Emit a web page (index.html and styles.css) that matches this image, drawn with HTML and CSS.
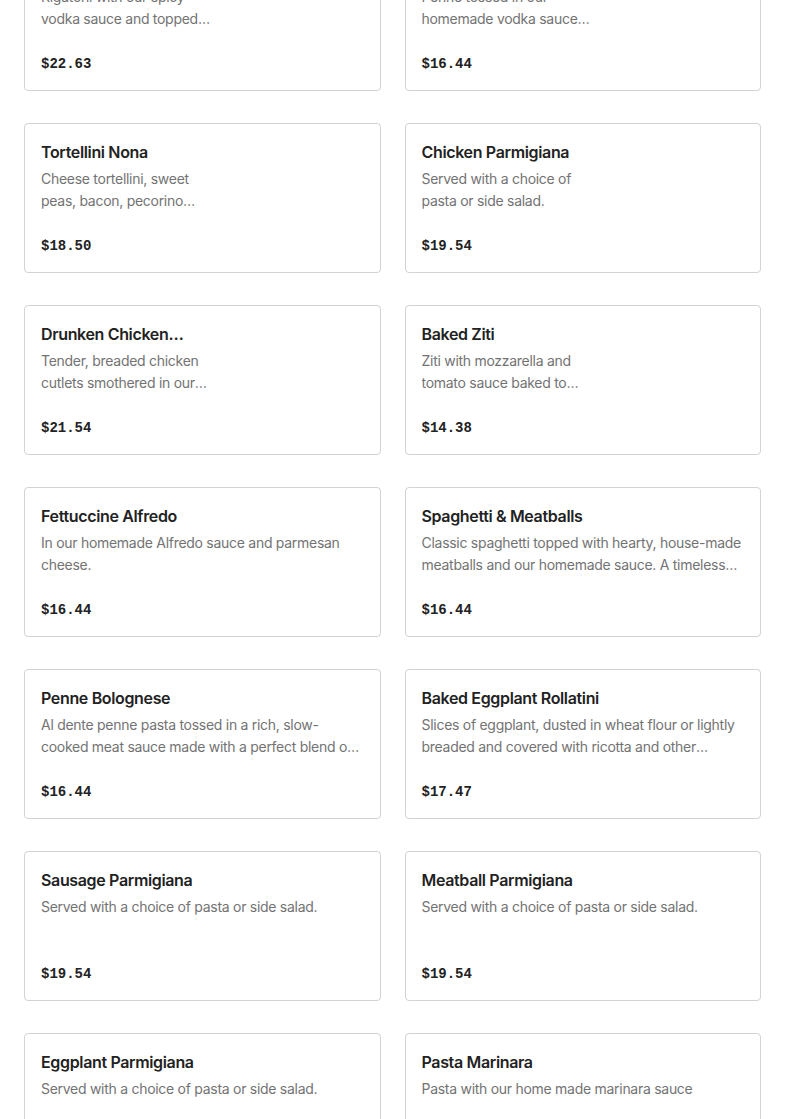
FILE: index.html
```html
<!DOCTYPE html>
<html lang="en">
<head>
<meta charset="utf-8">
<title>Menu</title>
<link rel="stylesheet" href="styles.css">
</head>
<body>
<main class="menu">
  <div class="grid">
    <article class="card"><h3 class="title narrow">Rigatoni alla Vodka</h3><p class="desc narrow">Rigatoni with our spicy vodka sauce and topped with fresh burrata.</p><div class="price">$22.63</div></article>
    <article class="card"><h3 class="title narrow">Penne alla Vodka</h3><p class="desc narrow">Penne tossed in our homemade vodka sauce with a touch of cream.</p><div class="price">$16.44</div></article>

    <article class="card"><h3 class="title narrow">Tortellini Nona</h3><p class="desc narrow">Cheese tortellini, sweet peas, bacon, pecorino cream sauce.</p><div class="price">$18.50</div></article>
    <article class="card"><h3 class="title narrow">Chicken Parmigiana</h3><p class="desc narrow">Served with a choice of pasta or side salad.</p><div class="price">$19.54</div></article>

    <article class="card"><h3 class="title narrow">Drunken Chicken Rigatoni</h3><p class="desc narrow">Tender, breaded chicken cutlets smothered in our vodka sauce.</p><div class="price">$21.54</div></article>
    <article class="card"><h3 class="title narrow">Baked Ziti</h3><p class="desc narrow">Ziti with mozzarella and tomato sauce baked to perfection.</p><div class="price">$14.38</div></article>

    <article class="card"><h3 class="title">Fettuccine Alfredo</h3><p class="desc">In our homemade Alfredo sauce and parmesan cheese.</p><div class="price">$16.44</div></article>
    <article class="card"><h3 class="title">Spaghetti &amp; Meatballs</h3><p class="desc">Classic spaghetti topped with hearty, house-made meatballs and our homemade sauce. A timeless favorite for the whole family.</p><div class="price">$16.44</div></article>

    <article class="card"><h3 class="title">Penne Bolognese</h3><p class="desc">Al dente penne pasta tossed in a rich, slow-cooked meat sauce made with a perfect blend of beef and pork.</p><div class="price">$16.44</div></article>
    <article class="card"><h3 class="title">Baked Eggplant Rollatini</h3><p class="desc">Slices of eggplant, dusted in wheat flour or lightly breaded and covered with ricotta and other cheeses.</p><div class="price">$17.47</div></article>

    <article class="card"><h3 class="title">Sausage Parmigiana</h3><p class="desc">Served with a choice of pasta or side salad.</p><div class="price">$19.54</div></article>
    <article class="card"><h3 class="title">Meatball Parmigiana</h3><p class="desc">Served with a choice of pasta or side salad.</p><div class="price">$19.54</div></article>

    <article class="card"><h3 class="title">Eggplant Parmigiana</h3><p class="desc">Served with a choice of pasta or side salad.</p><div class="price">$19.54</div></article>
    <article class="card"><h3 class="title">Pasta Marinara</h3><p class="desc">Pasta with our home made marinara sauce</p><div class="price">$13.40</div></article>
  </div>
</main>
</body>
</html>
```

FILE: styles.css
```css
html, body {
  margin: 0;
  padding: 0;
  background: #ffffff;
}

body {
  font-family: Inter, "Noto Sans", Arial, sans-serif;
  color: #1f1f1f;
  overflow: hidden;
  height: 1119px;
}

.menu {
  padding: 0 24px;
  margin-top: -59px;
}

.grid {
  display: grid;
  grid-template-columns: 1fr 1fr;
  column-gap: 24px;
  row-gap: 32px;
}

.card {
  box-sizing: border-box;
  height: 150px;
  border: 1px solid #d3d3d3;
  border-radius: 4px;
  padding: 16px 16px 14px;
  display: flex;
  flex-direction: column;
}

.title {
  margin: 0;
  font-size: 16px;
  font-weight: 600;
  letter-spacing: -0.35px;
  line-height: 24px;
  height: 24px;
  color: #222222;
  display: -webkit-box;
  -webkit-line-clamp: 1;
  -webkit-box-orient: vertical;
  overflow: hidden;
}

.desc {
  margin: 4px 0 0;
  font-size: 14px;
  letter-spacing: -0.28px;
  line-height: 22px;
  color: #737373;
  height: 44px;
  display: -webkit-box;
  -webkit-line-clamp: 2;
  -webkit-box-orient: vertical;
  overflow: hidden;
}

.narrow {
  max-width: 176px;
}

.price {
  margin-top: auto;
  font-family: "Liberation Mono", "DejaVu Sans Mono", monospace;
  font-weight: 700;
  font-size: 14px;
  line-height: 24px;
  color: #222222;
}
```
